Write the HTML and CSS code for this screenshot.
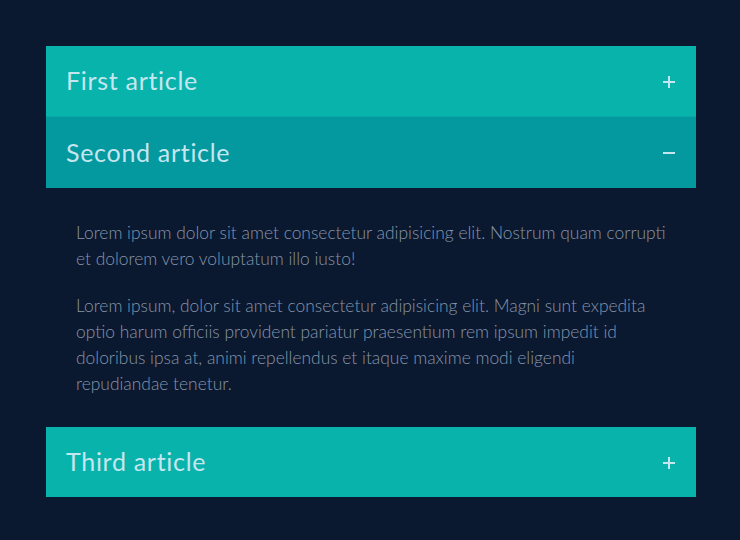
FILE: index.html
```html
<!DOCTYPE html>
<html>
<head>
<meta charset="utf-8">
<link rel="stylesheet" href="styles.css">
</head>
<body>
<div class="accordion">
  <div class="item">
    <div class="head">
      <span class="title">First article</span>
      <svg class="icon" width="14" height="14" viewBox="0 0 14 14"><path d="M7 1v12M1 7h12" stroke="currentColor" stroke-width="2"/></svg>
    </div>
  </div>
  <div class="item open">
    <div class="head">
      <span class="title">Second article</span>
      <svg class="icon" width="14" height="14" viewBox="0 0 14 14"><path d="M1 7h12" stroke="currentColor" stroke-width="2"/></svg>
    </div>
    <div class="body">
      <p>Lorem ipsum dolor sit amet consectetur adipisicing elit. Nostrum quam corrupti et dolorem vero voluptatum illo iusto!</p>
      <p>Lorem ipsum, dolor sit amet consectetur adipisicing elit. Magni sunt expedita optio harum officiis provident pariatur praesentium rem ipsum impedit id doloribus ipsa at, animi repellendus et itaque maxime modi eligendi repudiandae tenetur.</p>
    </div>
  </div>
  <div class="item">
    <div class="head">
      <span class="title">Third article</span>
      <svg class="icon" width="14" height="14" viewBox="0 0 14 14"><path d="M7 1v12M1 7h12" stroke="currentColor" stroke-width="2"/></svg>
    </div>
  </div>
</div>
</body>
</html>
```
FILE: styles.css
```css
html, body {
  margin: 0;
  padding: 0;
  background: #0a192f;
}
body {
  padding: 46px 44px 0 46px;
  font-family: Lato, "Open Sans", sans-serif;
}
.accordion {
  width: 650px;
  display: flex;
  flex-direction: column;
}
.head {
  height: 70px;
  box-sizing: border-box;
  display: flex;
  align-items: center;
  justify-content: space-between;
  padding: 0 20px 2px;
  background: #08b3ac;
  color: #c6e6ef;
}
.item:first-child .head {
  height: 71px;
  border-bottom: 1px solid #06a7a6;
}
.open .head {
  height: 71px;
  background: #03999f;
}
.title {
  font-size: 25px;
  font-weight: 400;
  letter-spacing: 0.7px;
}
.icon {
  margin-top: 3px;
}
.body {
  padding: 32px 30px 30px;
  color: #8794ac;
  font-size: 17.4px;
  font-weight: 300;
  line-height: 26px;
}
.body p {
  margin: 0;
}
.body p + p {
  margin-top: 21px;
}
```
